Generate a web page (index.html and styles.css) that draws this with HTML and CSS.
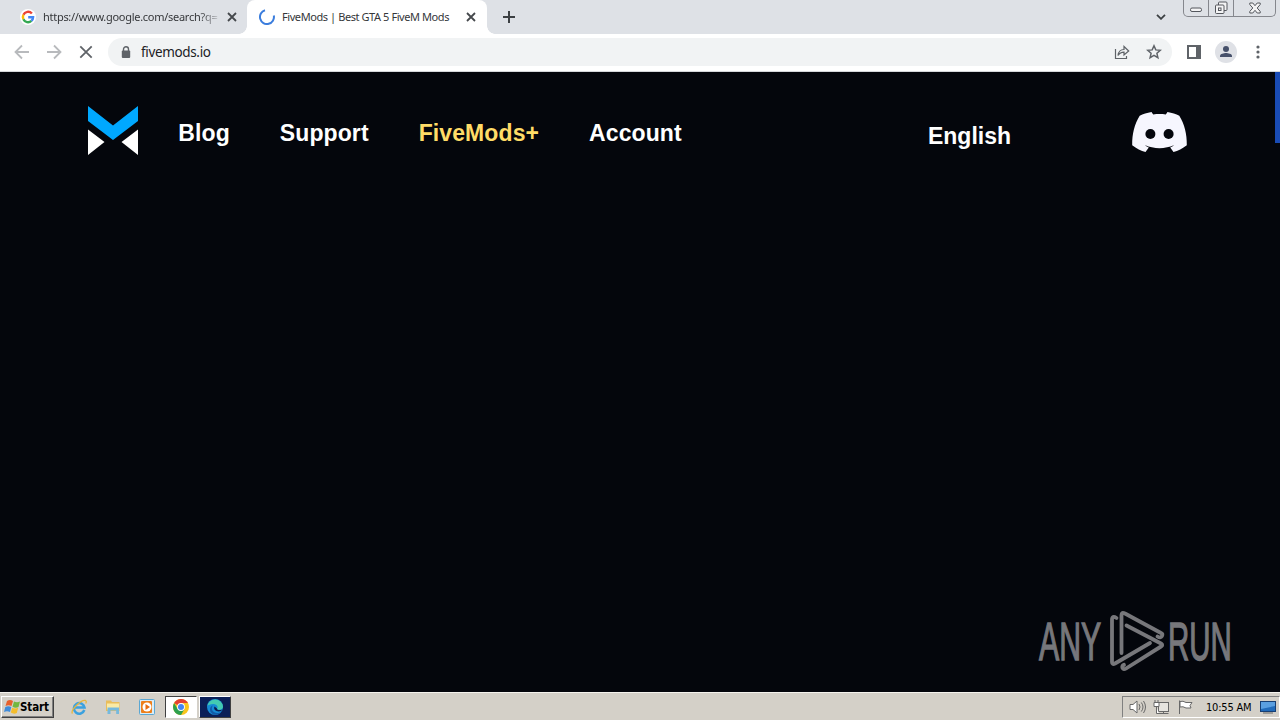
FILE: index.html
```html
<!DOCTYPE html>
<html lang="en">
<head>
    <meta charset="UTF-8">
    <meta name="viewport" content="width=device-width, initial-scale=1.0">
    <title>FiveMods | Best GTA 5 FiveM Mods</title>
    <link rel="stylesheet" href="styles.css">
</head>
<body>
    <div class="tab-strip">
        <div class="tab">
            <svg class="favicon" viewBox="0 0 16 16">
                <circle cx="8" cy="8" r="8" fill="#fff"/>
                <g fill="none" stroke-width="2.4">
                    <path d="M11.9 4.5A5.1 5.1 0 0 0 3.4 5.8" stroke="#ea4335"/>
                    <path d="M3.4 5.8a5.1 5.1 0 0 0 0 4.4" stroke="#fbbc05"/>
                    <path d="M3.4 10.2a5.1 5.1 0 0 0 8 1.7" stroke="#34a853"/>
                    <path d="M11.4 11.9A5 5 0 0 0 13.1 8.2H8.2" stroke="#4285f4"/>
                </g>
            </svg>
            <span class="tab-title tab-title-url">https://www.google.com/search?q=</span>
            <svg class="tab-close" viewBox="0 0 10 10"><path d="M1 1l8 8M9 1L1 9"/></svg>
        </div>
        <div class="tab active">
            <svg class="favicon" viewBox="0 0 16 16">
                <path d="M6 1.300A7 7 0 1 0 14.800 6.500" fill="none" stroke="#3b7ddd" stroke-width="2"/>
            </svg>
            <span class="tab-title">FiveMods | Best GTA 5 FiveM Mods</span>
            <svg class="tab-close" viewBox="0 0 10 10"><path d="M1 1l8 8M9 1L1 9"/></svg>
        </div>
        <svg class="new-tab" viewBox="0 0 12 12"><path d="M6 0v12M0 6h12"/></svg>
        <svg class="tab-search" viewBox="0 0 10 6"><path d="M1 .8l4 4 4-4"/></svg>
        <div class="window-buttons">
            <span class="minimize"><svg width="14" height="16" viewBox="0 0 14 16"><rect x="1.500" y="8" width="11" height="3.500" rx="1.500"/></svg></span>
            <span class="restore"><svg width="14" height="14" viewBox="0 0 14 14"><path d="M4.500 4V2q0-1 1-1H12q1 0 1 1v6.500q0 1-1 1h-2"/><rect x="1.500" y="4" width="8.500" height="8.500" rx="1"/><rect x="4.500" y="7" width="2.500" height="2.500"/></svg></span>
            <span class="close"><svg width="12" height="12" viewBox="0 0 12 12"><path d="M.8 1h3L6 3.700 8.200 1h3v1.600L8.200 6l3 3.400V11h-3L6 8.300 3.800 11h-3V9.400l3-3.400-3-3.400z"/></svg></span>
        </div>
    </div>

    <div class="toolbar">
        <svg class="nav-icon disabled" viewBox="0 0 16 16"><path d="M15 8H2M8 1.500L1.500 8 8 14.500"/></svg>
        <svg class="nav-icon disabled" viewBox="0 0 16 16"><path d="M1 8h13M8 1.500L14.500 8 8 14.500"/></svg>
        <svg class="nav-icon" viewBox="0 0 16 16"><path d="M2.300 2.300l11.400 11.400M13.700 2.300L2.300 13.700"/></svg>
        <div class="address-bar">
            <svg class="lock" viewBox="0 0 10 13"><path d="M2.500 5V3.300a2.500 2.500 0 0 1 5 0V5" fill="none" stroke="#5f6368" stroke-width="1.400"/><rect x=".8" y="4.500" width="8.400" height="7.500" rx="1" fill="#5f6368"/></svg>
            <span class="url">fivemods.io</span>
            <svg class="share" viewBox="0 0 16 16"><path d="M1.500 5v9.500h11V12M4 11.500c.5-4 2.500-6 6-6V2.500L14.700 7 10 11V8.200c-2.500 0-4.500 1-6 3.300z"/></svg>
            <svg class="star" viewBox="0 0 16 16"><path d="M8 1.800l1.800 4.100 4.500.4-3.400 3 1 4.400L8 11.400l-3.900 2.300 1-4.400-3.400-3 4.500-.4z"/></svg>
        </div>
        <svg class="side-panel" viewBox="0 0 14 14"><path d="M0 0h14v14H0zM2 2v10h7V2z" fill="#5f6368" fill-rule="evenodd"/></svg>
        <svg class="profile" viewBox="0 0 22 22"><circle cx="11" cy="11" r="11" fill="#dfe1e6"/><circle cx="11" cy="8" r="3" fill="#46506a"/><path d="M5 16v-1.200c0-2 4-2.900 6-2.900s6 .9 6 2.900V16z" fill="#46506a"/></svg>
        <svg class="menu" viewBox="0 0 4 14"><circle cx="2" cy="2" r="1.600"/><circle cx="2" cy="7" r="1.600"/><circle cx="2" cy="12" r="1.600"/></svg>
    </div>

    <main class="page">
        <header class="site-header">
            <svg class="logo" viewBox="0 0 50 50">
                <path d="M0 0l25 19.500L50 0v15L25 34 0 15z" fill="#00a8ff"/>
                <path d="M0 23.500L16.500 36 0 49zM50 23.500L33.500 36 50 49z" fill="#fff"/>
            </svg>
            <nav class="site-nav">
                <a>Blog</a>
                <a>Support</a>
                <a class="plus">FiveMods+</a>
                <a>Account</a>
            </nav>
            <a class="language">English</a>
            <svg class="discord" viewBox="0 0 55 41">
                <path d="M19.500 0C15 .8 11 2 7.700 3.700 2.500 12 0 22 .2 33.200 4.500 36.500 9 38.700 13.500 40l3.300-4.500c-1.500-.6-2.800-1.400-4-2.500 9 4.200 20.400 4.200 29.400 0-1.200 1.100-2.500 1.900-4 2.500l3.300 4.500c4.500-1.300 9-3.500 13.300-6.800.2-11.200-2.300-21.200-7.500-29.500C44 2 40 .8 35.500 0l-1.700 2.500c-4-.6-8.600-.6-12.600 0z" fill="#f6f6fe"/>
                <circle cx="18.400" cy="22" r="5" fill="#04060c"/>
                <circle cx="36.600" cy="22" r="5" fill="#04060c"/>
            </svg>
        </header>
        <div class="scroll-thumb"></div>
        <svg class="watermark" viewBox="0 0 210 64">
            <g class="watermark-text">
                <text transform="translate(4 50.500) scale(.57 1)">ANY</text>
                <text transform="translate(133 50.500) scale(.555 1)">RUN</text>
            </g>
            <g class="watermark-mark">
                <path d="M81.500 9Q77 6 77 11v42q0 3 3 1.500L115 34"/>
                <path d="M86.500 44V6q0-3.500 3.500-1.500l36 19.500q2 1 1 3-1.500 2.500-4.500.5"/>
                <path d="M91.500 16.500L126 34.500q2.500 1.500 0 3L91 59.500q-2.500 1.500-3.500-.5-.8-2 1.500-3.200"/>
            </g>
        </svg>
    </main>

    <footer class="taskbar">
        <div class="start-button">
            <svg width="17" height="16" viewBox="0 0 17 16">
                <path d="M3 2q3-2 6 0L7.500 7q-3-1.500-6 0z" fill="#e8602c"/>
                <path d="M10 2.500q3 1.500 6 0L14.500 8q-3 1.500-6-.3z" fill="#72b740"/>
                <path d="M1.300 8q3-1.500 6 0L6 13q-3-1.500-6 0z" fill="#408cda"/>
                <path d="M8.200 8.700q3 1.500 6 0L12.800 14q-3 1.500-6-.5z" fill="#f4bd2c"/>
            </svg>
            <span>Start</span>
        </div>
        <div class="quick-launch">
            <svg viewBox="0 0 16 16">
                <path d="M13.300 11A5.300 5.300 0 1 1 13.500 8.500H4" fill="none" stroke="#3ba1df" stroke-width="2.500"/>
                <path d="M1.500 14.500c-2.500-3 8.500-14 13-13 1.200.5.800 2 .2 3" fill="none" stroke="#e8b63c" stroke-width="1.300"/>
            </svg>
            <svg viewBox="0 0 16 16">
                <path d="M1 1.500h5L7 3h7.500v9H1z" fill="#e9bd5b"/>
                <path d="M2 4.500h12v6H2z" fill="#faeaa5"/>
                <path d="M2.500 15V8.500h11.500V15h-2.800v-3.500H5.500V15z" fill="#76b9dd"/>
            </svg>
            <svg viewBox="0 0 16 16">
                <rect x=".5" y=".5" width="15" height="15" rx="1" fill="#d9edf8" stroke="#5ba7d3"/>
                <rect x="2" y="2" width="11" height="12" rx="1" fill="#ed7f1b"/>
                <circle cx="8" cy="8" r="4.500" fill="#fff"/><path d="M6.500 5L11 8l-4.500 3z" fill="#e66c10"/>
            </svg>
        </div>
        <div class="task task-active">
            <svg viewBox="0 0 16 16">
                <circle cx="8" cy="8" r="8" fill="#f9c51d"/>
                <path d="M8 8L1.100 4A8 8 0 0 1 15 4H8z" fill="#e34133"/>
                <path d="M1.100 4A8 8 0 0 0 8 16l3.500-6L8 8 4.600 10z" fill="#2da04e"/>
                <circle cx="8" cy="8" r="3.900" fill="#fff"/><circle cx="8" cy="8" r="3" fill="#4285f4"/>
            </svg>
        </div>
        <div class="task task-edge">
            <svg viewBox="0 0 16 16">
                <circle cx="8" cy="8" r="8" fill="#168bd5"/>
                <path d="M.2 7A8 8 0 0 1 16 7.500c0 3-3.500 4-6 2.700 2-3-1-5.200-4-5.200-2.500 0-5 1-5.800 2z" fill="#43cbb2"/>
                <path d="M6 6.500c-3 3 0 7.500 4 7.500 2 0 3.500-.7 4.500-1.500C11 18 3 16 3 10.500 3 8.500 4 7 6 6.500z" fill="#125ba8"/>
                <path d="M7.500 7.500c-1.500 3 2 6 6.500 4.500l1.500-1.500c-3 1-6 .5-5.500-1z" fill="#0b1e50"/>
            </svg>
        </div>
        <div class="tray">
            <svg viewBox="0 0 17 16"><path d="M1 5.500h3L8 2v12l-4-3.500H1z" fill="#fff"/><path d="M10 5q2 3 0 6M12.300 3.500q3.400 4.500 0 9M14.500 2q4 6 0 12"/></svg>
            <svg viewBox="0 0 17 16"><rect x="5.500" y="3.500" width="10" height="9" fill="#e6e4df"/><path d="M6 14.500h9.500M10.500 12.500v2"/><path d="M1 3.500h5v4H1zM2 1v2.500M5 1v2.500M3.500 7.500v7H6" fill="#fff"/></svg>
            <svg viewBox="0 0 17 16"><path d="M2.500 15V1.500M3 2.500q3-1 6 1h6l-2 3 1 2.500H9Q6 7 3 8z" fill="#fff"/></svg>
            <span class="clock">10:55 AM</span>
            <svg class="desktop" viewBox="0 0 16 14"><rect x=".5" y="1.500" width="15" height="10" fill="#216bba" stroke="#173f74"/><path d="M1 2h14v4L1 9z" fill="#5a9fe0" stroke="none"/><path d="M3 13h10"/></svg>
        </div>
    </footer>
</body>
</html>
```
FILE: styles.css
```css
:root {
    --strip-bg: #dee1e6;
    --page-bg: #04060c;
    --taskbar-bg: #d4d0c8;
    --icon-color: #5f6368;
    --ui-font: "DejaVu Sans Condensed", "DejaVu Sans", sans-serif;
}

* {
    box-sizing: border-box;
}

body {
    margin: 0;
    width: 1280px;
    height: 720px;
    overflow: hidden;
    display: flex;
    flex-direction: column;
    background: var(--page-bg);
    font-family: var(--ui-font);
}

svg {
    display: block;
    flex-shrink: 0;
}

/* Browser tabs */
.tab-strip {
    height: 34px;
    display: flex;
    align-items: center;
    background: var(--strip-bg);
    flex-shrink: 0;
}

.tab {
    width: 247px;
    height: 34px;
    display: flex;
    align-items: center;
    padding: 0 10px 0 20px;
}

.tab.active {
    position: relative;
    width: 240px;
    padding: 0 11px 0 12px;
    background: #fff;
    border-radius: 8px 8px 0 0;
}

.tab.active::before,
.tab.active::after {
    content: "";
    position: absolute;
    bottom: 0;
    width: 8px;
    height: 8px;
}

.tab.active::before {
    left: -8px;
    background: radial-gradient(circle at 0 0, transparent 7.5px, #fff 8px);
}

.tab.active::after {
    right: -8px;
    background: radial-gradient(circle at 100% 0, transparent 7.5px, #fff 8px);
}

.favicon {
    width: 16px;
    height: 16px;
    margin-right: 7px;
}

.tab-title {
    width: 178px;
    padding-bottom: 2px;
    white-space: nowrap;
    font-family: "Noto Sans", sans-serif;
    font-size: 11px;
    letter-spacing: -0.42px;
    color: #35373a;
}

.tab-title-url {
    letter-spacing: -0.28px;
    mask-image: linear-gradient(to right, #000 88%, transparent);
}

.tab-close {
    width: 10px;
    height: 10px;
    margin-left: auto;
    stroke: #45484c;
    stroke-width: 1.8;
}

.new-tab {
    width: 12px;
    height: 12px;
    margin-left: 16px;
    stroke: #3c4043;
    stroke-width: 2;
}

.tab-search {
    width: 10px;
    height: 6px;
    margin-left: auto;
    fill: none;
    stroke: #3c4043;
    stroke-width: 1.8;
}

.window-buttons {
    display: flex;
    align-self: flex-start;
    width: 93px;
    height: 17px;
    margin: 0 4px 0 17px;
    border: 1px solid #85878d;
    border-top: none;
    border-radius: 0 0 5px 5px;
}

.window-buttons span {
    display: flex;
    align-items: center;
    justify-content: center;
    border-right: 1px solid #85878d;
}

.window-buttons .minimize {
    width: 25px;
}

.window-buttons .restore {
    width: 25px;
}

.window-buttons .close {
    width: 41px;
    border: none;
}

.window-buttons svg {
    fill: #f3f3f4;
    stroke: #54575d;
}

/* Toolbar */
.toolbar {
    height: 38px;
    display: flex;
    align-items: center;
    padding: 0 20px 1px 14px;
    background: #fff;
    border-bottom: 1px solid #d5d7da;
    flex-shrink: 0;
}

.nav-icon {
    width: 16px;
    height: 16px;
    margin-right: 16px;
    fill: none;
    stroke: var(--icon-color);
    stroke-width: 1.8;
}

.nav-icon.disabled {
    stroke: #b8babd;
}

.address-bar {
    width: 1064px;
    height: 28px;
    display: flex;
    align-items: center;
    margin-left: -2px;
    padding: 0 10px 0 13px;
    border-radius: 14px;
    background: #f1f3f4;
}

.lock {
    width: 10px;
    height: 13px;
}

.url {
    margin-left: 10px;
    font-family: "Noto Sans", sans-serif;
    font-size: 13.5px;
    letter-spacing: -0.35px;
    color: #202124;
}

.share,
.star {
    width: 16px;
    height: 16px;
    fill: none;
    stroke: var(--icon-color);
    stroke-width: 1.2;
}

.share {
    margin-left: auto;
}

.star {
    margin-left: 16px;
    stroke-width: 1.5;
}

.side-panel {
    width: 14px;
    height: 14px;
    margin-left: 15px;
}

.profile {
    width: 22px;
    height: 22px;
    margin-left: 14px;
}

.menu {
    width: 4px;
    height: 14px;
    margin-left: auto;
    fill: var(--icon-color);
}

/* Site */
.page {
    position: relative;
    height: 620px;
    background: var(--page-bg);
    flex-shrink: 0;
}

.site-header {
    display: flex;
    align-items: flex-start;
    padding: 34px 93px 0 88px;
}

.logo {
    width: 50px;
    height: 50px;
}

.site-nav {
    display: flex;
    gap: 50px;
    margin: 14px 0 0 40.3px;
}

.site-nav a,
.language {
    font-family: "Liberation Sans", Arial, sans-serif;
    font-size: 23px;
    font-weight: bold;
    line-height: 26px;
    letter-spacing: 0.1px;
    color: #fff;
}

.site-nav .plus {
    color: #ffdc67;
}

.language {
    margin: 17px 121px 0 auto;
    letter-spacing: 0;
}

.discord {
    width: 55px;
    height: 41px;
    margin-top: 6px;
}

.scroll-thumb {
    position: absolute;
    top: 0;
    right: 0;
    width: 5px;
    height: 71px;
    background: #194bb5;
}

.watermark {
    position: absolute;
    right: 35px;
    bottom: 19px;
    width: 210px;
    height: 64px;
    overflow: visible;
}

.watermark-text {
    fill: #77777b;
    stroke: #77777b;
    stroke-width: 1.4;
    font-family: "Liberation Sans", Arial, sans-serif;
    font-size: 53px;
}

.watermark-mark {
    fill: none;
    stroke: #77777b;
    stroke-width: 3.8;
    stroke-linecap: round;
    stroke-linejoin: round;
}

/* Taskbar */
.taskbar {
    height: 28px;
    display: flex;
    align-items: center;
    padding: 1px 0 0 1px;
    background: var(--taskbar-bg);
    border-top: 1px solid #f4f2ed;
    flex-shrink: 0;
}

.start-button {
    width: 53px;
    height: 22px;
    display: flex;
    align-items: center;
    padding-left: 2px;
    border: 1px solid;
    border-color: #fff #404040 #404040 #fff;
    box-shadow: inset -1px -1px #808080;
    font-size: 11.5px;
    font-weight: bold;
    color: #000;
}

.start-button span {
    margin-left: -1px;
    letter-spacing: -0.1px;
}

.quick-launch {
    display: flex;
    gap: 18px;
    margin-left: 17px;
}

.quick-launch svg,
.task svg {
    width: 16px;
    height: 16px;
}

.task {
    width: 32px;
    height: 22px;
    display: flex;
    align-items: center;
    justify-content: center;
    border: 1px solid;
}

.task-active {
    margin-left: 10px;
    background: #fff;
    border-color: #404040 #fff #fff #404040;
}

.task-edge {
    margin-left: 2px;
    background: #0b1f57;
    border-color: #fff #404040 #404040 #fff;
}

.tray {
    width: 158px;
    height: 22px;
    display: flex;
    align-items: center;
    gap: 7px;
    margin-left: auto;
    padding-left: 6px;
    border: 1px solid;
    border-color: #808080 #fff #fff #808080;
}

.tray svg {
    width: 17px;
    height: 16px;
    fill: none;
    stroke: #686868;
}

.clock {
    width: 47px;
    margin-left: 5px;
    white-space: nowrap;
    font-size: 11px;
    letter-spacing: -0.2px;
    color: #000;
}

.tray .desktop {
    width: 16px;
    height: 14px;
}
```
